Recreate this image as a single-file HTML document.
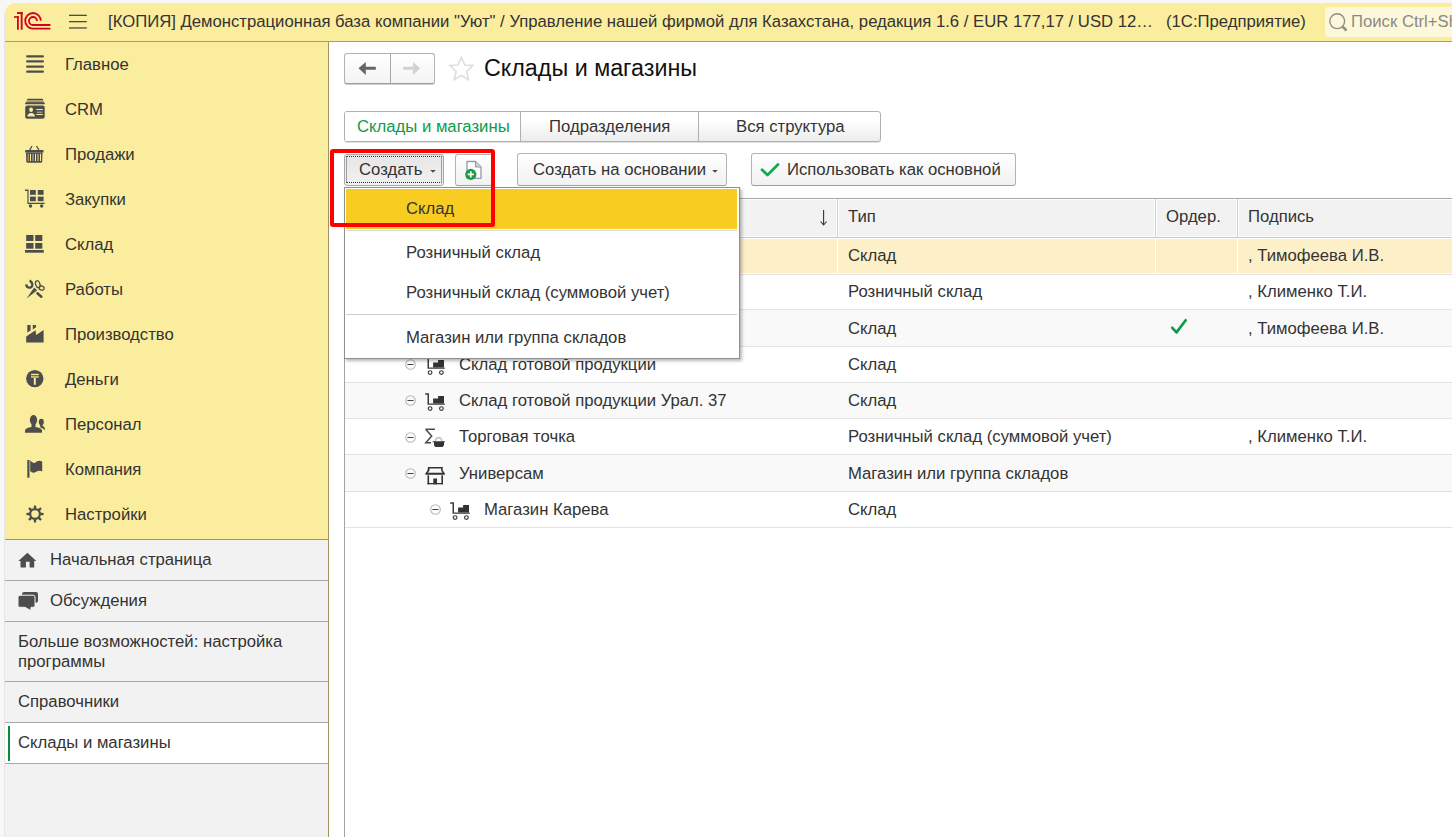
<!DOCTYPE html>
<html><head><meta charset="utf-8">
<style>
*{box-sizing:border-box;margin:0;padding:0}
html,body{width:1452px;height:837px;overflow:hidden;background:#f7f7f7;font-family:"Liberation Sans",sans-serif;color:#333}
.a{position:absolute}
.t{position:absolute;white-space:nowrap;font-size:16.7px;line-height:20px}
svg{position:absolute;overflow:visible}
#hdr{position:absolute;left:5px;top:3px;width:1447px;height:39px;background:#fbed9e;border-bottom:1px solid #a49e69;border-top-left-radius:10px}
#side{position:absolute;left:5px;top:42px;width:324px;height:795px;background:#f2f2f2;border-right:1px solid #9f9763}
#secs{position:absolute;left:5px;top:42px;width:323px;height:498px;background:#fbed9e;border-bottom:1px solid #9f9763}
#content{position:absolute;left:329px;top:42px;width:1123px;height:795px;background:#fff}
.hl{position:absolute;left:5px;width:323px;height:1px;background:#a9a9a9}
</style></head><body>
<div id="hdr"></div>
<div id="side"></div>
<div id="secs"></div>
<div id="content"></div>
<div class="a" style="left:4px;top:14px;width:1px;height:823px;background:#e6e6e6"></div>
<div class="hl" style="top:580px"></div>
<div class="hl" style="top:621px"></div>
<div class="hl" style="top:681px"></div>
<div class="hl" style="top:722px"></div>
<div class="a" style="left:5px;top:723px;width:323px;height:40px;background:#fff"></div>
<div class="hl" style="top:763px"></div>
<div class="a" style="left:8px;top:726px;width:2px;height:35px;background:#0a8a3c"></div>


<!-- header icons -->
<svg style="left:0;top:0" width="100" height="40" viewBox="0 0 100 40">
 <g fill="#d4011b">
  <rect x="17" y="12.1" width="5.6" height="1.9"/>
  <rect x="20.7" y="12.1" width="1.9" height="17.6"/>
  <rect x="17" y="16.2" width="1.8" height="13.5"/>
  <rect x="14" y="16.2" width="4.8" height="1.6"/>
 </g>
 <g fill="none" stroke="#d4011b" stroke-width="1.8">
  <path d="M33,28.6 A7.8,7.8 0 1 1 40.8,20.8"/>
  <path d="M33,25 A4,4 0 1 1 37,21"/>
  <path d="M33,28.6 H50.4 M33,25 H50.4"/>
 </g>
 <g fill="#4a4a4a">
  <rect x="69" y="14.7" width="17.8" height="1.3"/>
  <rect x="69" y="21" width="17.8" height="1.3"/>
  <rect x="69" y="27.3" width="17.8" height="1.3"/>
 </g>
</svg>

<!-- sidebar icons -->
<svg style="left:20px;top:50px" width="30" height="30" viewBox="0 0 30 30" fill="#4d4d4d">
 <rect x="6.2" y="5.2" width="17.7" height="2.3" rx=".8"/>
 <rect x="6.2" y="10.3" width="17.7" height="2.3" rx=".8"/>
 <rect x="6.2" y="15.4" width="17.7" height="2.3" rx=".8"/>
 <rect x="6.2" y="20.5" width="17.7" height="2.3" rx=".8"/>
</svg>
<svg style="left:20px;top:95px" width="30" height="30" viewBox="0 0 30 30">
 <path d="M7.6,4 H22.6 L24.7,8.9 H5.2 Z" fill="#4d4d4d" opacity=".5"/>
 <rect x="7.2" y="3.8" width="15.8" height="1.3" rx=".6" fill="#4d4d4d"/>
 <path d="M5.2,8.6 Q5.2,7.2 6.6,7.2 H23.3 Q24.7,7.2 24.7,8.6 V9.2 H5.2 Z" fill="#4d4d4d"/>
 <rect x="5.2" y="10.4" width="19.5" height="13.4" rx="2" fill="#4d4d4d"/>
 <g fill="#fbed9e">
  <ellipse cx="11.1" cy="14.7" rx="1.9" ry="2.2"/>
  <path d="M7.4,21.6 Q7.6,18.2 11.2,18.1 Q14.8,18.2 15,21.6 Z"/>
  <rect x="16.3" y="14" width="6.5" height="1"/>
  <rect x="16.8" y="16.7" width="5.5" height="1" opacity=".7"/>
  <rect x="16.3" y="19" width="6.5" height="1"/>
 </g>
</svg>
<svg style="left:20px;top:140px" width="30" height="30" viewBox="0 0 30 30">
 <path d="M12,6 L9.5,10.5 M16.5,6 L19.2,10.5" stroke="#4d4d4d" stroke-width="1.3"/>
 <rect x="5.2" y="10" width="18.3" height="2.6" rx=".6" fill="#4d4d4d"/>
 <path d="M6,12.5 H22.5 L22.2,21.5 Q22,22.7 21,22.7 H7.5 Q6.5,22.7 6.3,21.5 Z" fill="#4d4d4d"/>
 <g fill="#fbed9e">
  <rect x="10" y="13.8" width="1" height="7.3"/>
  <rect x="15" y="13.8" width="1" height="7.3"/>
  <rect x="20" y="13.8" width="1" height="7.3"/>
  <rect x="7.6" y="13.8" width="1.4" height="7.3" opacity=".45"/>
  <rect x="12.2" y="13.8" width="1.6" height="7.3" opacity=".45"/>
  <rect x="17" y="13.8" width="2" height="7.3" opacity=".45"/>
 </g>
</svg>
<svg style="left:20px;top:185px" width="30" height="30" viewBox="0 0 30 30" fill="#4d4d4d">
 <path d="M5,4.6 H8.6 V17.7 H24.7 V18.9 H7.4 V5.9 H5 Z"/>
 <rect x="10" y="5" width="5.8" height="4.8"/>
 <rect x="17.8" y="5" width="5.8" height="4.8"/>
 <rect x="10" y="11.6" width="5.8" height="4.6"/>
 <rect x="17.8" y="11.6" width="5.8" height="4.6"/>
 <circle cx="10.5" cy="21" r="1.7"/>
 <circle cx="21.7" cy="21" r="1.7"/>
</svg>
<svg style="left:20px;top:230px" width="30" height="30" viewBox="0 0 30 30" fill="#4d4d4d">
 <rect x="6.2" y="5" width="7.3" height="6"/>
 <rect x="15.2" y="5" width="7.1" height="6"/>
 <rect x="6.2" y="13" width="7.3" height="5.7"/>
 <rect x="15.2" y="13" width="7.1" height="5.7"/>
 <rect x="5" y="20" width="18.8" height="2.7"/>
</svg>
<svg style="left:20px;top:275px" width="30" height="30" viewBox="0 0 30 30">
 <g fill="none" stroke="#4d4d4d">
  <path d="M6.2,9.3 Q6.5,12.5 9.5,12.6 Q12.6,12.4 12.3,9.2 Q12,6.8 9.6,5.6" stroke-width="2.3"/>
  <ellipse cx="17.8" cy="9.2" rx="2.1" ry="3.6" stroke-width="1.3" transform="rotate(-20 17.8 9.2)"/>
  <ellipse cx="21.6" cy="13" rx="2.6" ry="2.1" stroke-width="1.3" transform="rotate(20 21.6 13)"/>
  <path d="M17.4,18.3 L21.3,21.7" stroke-width="2.6" stroke-linecap="round"/>
 </g>
 <path d="M6.6,23.6 L14.2,12.6 L17.2,15.2 Z" fill="#4d4d4d"/>
</svg>
<svg style="left:20px;top:320px" width="30" height="30" viewBox="0 0 30 30" fill="#4d4d4d">
 <path d="M7.3,5 H10.6 V10.6 L7.3,12.6 Z"/>
 <path d="M12.8,5 H16 V7.3 L12.8,9.4 Z"/>
 <path d="M6.2,16.4 L15.6,10.3 L16.1,15 L23.6,10 V22.6 H6.2 Z"/>
</svg>
<svg style="left:20px;top:365px" width="30" height="30" viewBox="0 0 30 30">
 <circle cx="14.8" cy="13.6" r="8.7" fill="#4d4d4d"/>
 <g fill="#fbed9e">
  <rect x="11" y="8.8" width="7.8" height="1.3"/>
  <rect x="11" y="10.8" width="7.8" height="2" opacity=".7"/>
  <rect x="13.8" y="12.8" width="2" height="7"/>
 </g>
</svg>
<svg style="left:20px;top:410px" width="30" height="30" viewBox="0 0 30 30" fill="#4d4d4d">
 <ellipse cx="13.5" cy="10" rx="3.6" ry="5"/>
 <path d="M11.5,14 H15.5 V17 Q20.5,17.6 22,20 V22.7 H5 V20 Q6.5,17.6 11.5,17 Z"/>
 <ellipse cx="21.3" cy="12.1" rx="2.5" ry="3.3"/>
 <path d="M19.9,14.6 H22.5 L22.7,16 Q24.7,16.8 24.9,18.6 V20.2 Q23,18.2 20.6,17.8 Z"/>
</svg>
<svg style="left:20px;top:455px" width="30" height="30" viewBox="0 0 30 30" fill="#4d4d4d">
 <rect x="7.3" y="5" width="2.2" height="17.7"/>
 <path d="M10.2,5.5 Q12.5,8.3 15,7.8 Q18.5,4.3 22.2,6.6 V16.5 Q19.5,14.6 15.8,17 Q12.5,18.7 10.2,16 Z"/>
</svg>
<svg style="left:20px;top:500px" width="30" height="30" viewBox="0 0 30 30">
 <g transform="translate(15,14)" fill="#4d4d4d"><path d="M-1.4,-5.2 L-1,-8.6 H1 L1.4,-5.2 Z" transform="rotate(0)"/><path d="M-1.4,-5.2 L-1,-8.6 H1 L1.4,-5.2 Z" transform="rotate(45)"/><path d="M-1.4,-5.2 L-1,-8.6 H1 L1.4,-5.2 Z" transform="rotate(90)"/><path d="M-1.4,-5.2 L-1,-8.6 H1 L1.4,-5.2 Z" transform="rotate(135)"/><path d="M-1.4,-5.2 L-1,-8.6 H1 L1.4,-5.2 Z" transform="rotate(180)"/><path d="M-1.4,-5.2 L-1,-8.6 H1 L1.4,-5.2 Z" transform="rotate(225)"/><path d="M-1.4,-5.2 L-1,-8.6 H1 L1.4,-5.2 Z" transform="rotate(270)"/><path d="M-1.4,-5.2 L-1,-8.6 H1 L1.4,-5.2 Z" transform="rotate(315)"/>
  <circle cx="0" cy="0" r="4.85" fill="none" stroke="#4d4d4d" stroke-width="2.2"/>
 </g>
</svg>
<svg style="left:10px;top:545px" width="30" height="70" viewBox="0 0 30 70" fill="#4d4d4d">
 <path d="M8.4,16 L17.4,7.7 L26.3,16 Z"/>
 <path d="M10.5,15 H24.2 V22.4 H19.6 V16.8 H15.9 V22.4 H10.5 Z"/>
 <rect x="12" y="47" width="16" height="10.7" rx="2"/>
 <path d="M9,50.2 H23.2 Q25,50.2 25,52 V60.5 Q25,62.3 23.2,62.3 H21 L20.8,65.6 L15,62.3 H9.8 Q8,62.3 8,60.5 V52 Q8,50.2 9.8,50.2 Z" stroke="#f2f2f2" stroke-width="1"/>
</svg>


<!-- ===== content ===== -->
<!-- nav buttons -->
<div class="a" style="left:344px;top:53px;width:91px;height:31px;border:1px solid #b3b3b3;border-bottom-color:#9d9d9d;border-radius:3px;background:linear-gradient(#fff,#f4f4f4);box-shadow:0 1px 0 #d0d0d0"></div>
<div class="a" style="left:390px;top:54px;width:1px;height:29px;background:#a8a8a8"></div>
<svg style="left:340px;top:48px" width="100" height="40" viewBox="0 0 100 40">
 <path d="M18.5,20.3 L25.8,14.1 V18.8 H35.8 V21.8 H25.8 V26.9 Z" fill="#666"/>
 <path d="M80.2,20.3 L72.9,14.1 V18.8 H63.2 V21.8 H72.9 V26.9 Z" fill="#d2d2d2"/>
</svg>
<svg style="left:445px;top:53px" width="32" height="32" viewBox="0 0 32 32">
 <path d="M16.4,4.2 L19.8,12 L27.8,12.4 L21.7,18.4 L23.5,26.7 L16.4,22.5 L9.3,26.7 L11.1,18.4 L5,12.4 L13,12 Z" fill="none" stroke="#dedede" stroke-width="1.6" stroke-linejoin="miter"/>
</svg>
<div class="t" style="left:484px;top:53px;font-size:23.3px;line-height:30px;color:#111">Склады и магазины</div>

<!-- tabs -->
<div class="a" style="left:344px;top:111px;width:537px;height:31px;border:1px solid #b0b0b0;border-radius:3px;background:linear-gradient(#fff 30%,#ececec);box-shadow:0 1px 0 #e0e0e0"></div>
<div class="a" style="left:345px;top:112px;width:175px;height:29px;background:#fff;border-radius:2px 0 0 2px"></div>
<div class="a" style="left:520px;top:112px;width:1px;height:29px;background:#b0b0b0"></div>
<div class="a" style="left:698px;top:112px;width:1px;height:29px;background:#b0b0b0"></div>
<div class="t" style="left:357px;top:117px;color:#0d9a4c">Склады и магазины</div>
<div class="t" style="left:549px;top:117px">Подразделения</div>
<div class="t" style="left:736px;top:117px">Вся структура</div>

<!-- command bar -->
<div class="a" style="left:344px;top:154px;width:100px;height:32px;border:1px solid #a9a9a9;border-radius:3px;background:linear-gradient(#e6e6e6,#f1f1f1)"></div>
<div class="a" style="left:346px;top:156px;width:96px;height:27px;border-top:1px dotted #333;border-bottom:1px dotted #333;border-left:1px solid #a0a0a0;border-right:1px solid #a0a0a0"></div>
<div class="t" style="left:359px;top:160px">Создать</div>
<svg style="left:428px;top:168px" width="10" height="6" viewBox="0 0 10 6"><path d="M2.2,2 H7.8 L5,4.8 Z" fill="#4d4d4d"/></svg>

<div class="a" style="left:455px;top:154px;width:38px;height:32px;border:1px solid #b3b3b3;border-bottom-color:#9d9d9d;border-radius:3px;background:linear-gradient(#fff,#f1f1f1)"></div>
<svg style="left:450px;top:150px" width="50" height="40" viewBox="0 0 50 40">
 <path d="M17,11.5 H25.5 L31,17 V28.3 H17 Z" fill="#fff" stroke="#8f9cab" stroke-width="1.3" stroke-linejoin="round"/>
 <path d="M25.5,11.5 V17 H31" fill="#c9d3de" stroke="#8f9cab" stroke-width="1.1"/>
 <circle cx="20.8" cy="24.4" r="5.6" fill="#1d9d3f"/>
 <path d="M20.8,21.3 V27.5 M17.7,24.4 H23.9" stroke="#fff" stroke-width="1.6"/>
</svg>

<div class="a" style="left:517px;top:153px;width:210px;height:33px;border:1px solid #b3b3b3;border-bottom-color:#9d9d9d;border-radius:3px;background:linear-gradient(#fff,#f1f1f1)"></div>
<div class="t" style="left:533px;top:160px">Создать на основании</div>
<svg style="left:710px;top:168px" width="10" height="6" viewBox="0 0 10 6"><path d="M2.1,2.1 H7.9 L5,4.8 Z" fill="#4d4d4d"/></svg>

<div class="a" style="left:751px;top:153px;width:265px;height:33px;border:1px solid #b3b3b3;border-bottom-color:#9d9d9d;border-radius:3px;background:linear-gradient(#fff,#f1f1f1)"></div>
<svg style="left:755px;top:155px" width="30" height="30" viewBox="0 0 30 30"><path d="M7,14.7 L12.5,20 L23,9.5" fill="none" stroke="#16aa4e" stroke-width="2.8" stroke-linejoin="round" stroke-linecap="round"/></svg>
<div class="t" style="left:787px;top:160px">Использовать как основной</div>

<!-- table -->
<div class="a" style="left:344px;top:198px;width:1px;height:639px;background:#a3a3a3"></div>
<div class="a" style="left:345px;top:198px;width:1107px;height:1px;background:#a5a5a5"></div>
<div class="a" style="left:345px;top:199px;width:1107px;height:38px;background:#fff"></div>
<div class="a" style="left:345px;top:200px;width:491px;height:36px;background:#f2f2f2"></div>
<div class="a" style="left:839px;top:200px;width:315px;height:36px;background:#f2f2f2"></div>
<div class="a" style="left:1157px;top:200px;width:79px;height:36px;background:#f2f2f2"></div>
<div class="a" style="left:1239px;top:200px;width:213px;height:36px;background:#f2f2f2"></div>
<div class="a" style="left:345px;top:237px;width:1107px;height:1px;background:#c9c9c9"></div>
<div class="a" style="left:837px;top:199px;width:1px;height:38px;background:#cfcfcf"></div>
<div class="a" style="left:1155px;top:199px;width:1px;height:38px;background:#cfcfcf"></div>
<div class="a" style="left:1237px;top:199px;width:1px;height:38px;background:#cfcfcf"></div>
<svg style="left:815px;top:205px" width="20" height="25" viewBox="0 0 20 25"><path d="M8.6,5 V19.5" stroke="#333" stroke-width="1.1"/><path d="M5.6,16.5 L8.6,20 L11.6,16.5" fill="none" stroke="#333" stroke-width="1.1"/></svg>
<div class="t" style="left:848px;top:207px">Тип</div>
<div class="t" style="left:1166px;top:207px">Ордер.</div>
<div class="t" style="left:1248px;top:207px">Подпись</div>

<!-- rows -->
<div class="a" style="left:345px;top:239px;width:1107px;height:34px;background:#fdf0c8"></div>
<div class="a" style="left:837px;top:239px;width:1px;height:34px;background:#fff"></div>
<div class="a" style="left:1155px;top:239px;width:1px;height:34px;background:#fff"></div>
<div class="a" style="left:1237px;top:239px;width:1px;height:34px;background:#fff"></div>
<div class="a" style="left:345px;top:274px;width:1107px;height:1px;background:#e2e2e2"></div>
<div class="a" style="left:345px;top:309px;width:1107px;height:1px;background:#e2e2e2"></div>
<div class="a" style="left:345px;top:310px;width:1107px;height:36px;background:#f9f9f9"></div>
<div class="a" style="left:345px;top:346px;width:1107px;height:1px;background:#e2e2e2"></div>
<div class="a" style="left:345px;top:382px;width:1107px;height:1px;background:#e2e2e2"></div>
<div class="a" style="left:345px;top:383px;width:1107px;height:35px;background:#f9f9f9"></div>
<div class="a" style="left:345px;top:418px;width:1107px;height:1px;background:#e2e2e2"></div>
<div class="a" style="left:345px;top:454px;width:1107px;height:1px;background:#e2e2e2"></div>
<div class="a" style="left:345px;top:455px;width:1107px;height:36px;background:#f9f9f9"></div>
<div class="a" style="left:345px;top:491px;width:1107px;height:1px;background:#e2e2e2"></div>
<div class="a" style="left:345px;top:527px;width:1107px;height:1px;background:#e2e2e2"></div>

<div class="t" style="left:848px;top:246px">Склад</div>
<div class="t" style="left:1248px;top:246px">, Тимофеева И.В.</div>
<div class="t" style="left:848px;top:282px">Розничный склад</div>
<div class="t" style="left:1248px;top:282px">, Клименко Т.И.</div>
<div class="t" style="left:848px;top:319px">Склад</div>
<svg style="left:1160px;top:310px" width="40" height="35" viewBox="0 0 40 35"><path d="M12.3,17.8 L16.5,22.4 L25.7,10.3" fill="none" stroke="#109a48" stroke-width="2.7" stroke-linecap="round" stroke-linejoin="round"/></svg>
<div class="t" style="left:1248px;top:319px">, Тимофеева И.В.</div>

<div class="t" style="left:459px;top:355px">Склад готовой продукции</div>
<div class="t" style="left:848px;top:355px">Склад</div>
<div class="t" style="left:459px;top:391px">Склад готовой продукции Урал. 37</div>
<div class="t" style="left:848px;top:391px">Склад</div>
<div class="t" style="left:459px;top:427px">Торговая точка</div>
<div class="t" style="left:848px;top:427px">Розничный склад (суммовой учет)</div>
<div class="t" style="left:1248px;top:427px">, Клименко Т.И.</div>
<div class="t" style="left:459px;top:464px">Универсам</div>
<div class="t" style="left:848px;top:464px">Магазин или группа складов</div>
<div class="t" style="left:484px;top:500px">Магазин Карева</div>
<div class="t" style="left:848px;top:500px">Склад</div>


<!-- tree icons -->
<svg style="left:0;top:0;width:0;height:0">
 <defs>
  <g id="minus"><circle cx="0" cy="0" r="4.8" fill="none" stroke="#b9b9b9" stroke-width="1.1"/><path d="M-3.1,0 H3.1" stroke="#444" stroke-width="1"/></g>
  <g id="cart" fill="#333">
   <path d="M14.7,-7.2 H18.5 V2.9 H34 L34.6,4.3 H17 V-5.7 H14.7 Z" fill="#3c3c3c"/>
   <path d="M22.6,-2 H27.6 V-4.5 H33.5 V2.9 H22.6 Z"/>
   <circle cx="19.6" cy="8.1" r="1.85" fill="none" stroke="#3a3a3a" stroke-width="1.2"/>
   <circle cx="30.9" cy="8.1" r="1.85" fill="none" stroke="#3a3a3a" stroke-width="1.2"/>
  </g>
 </defs>
</svg>
<svg style="left:410px;top:364px" width="1" height="1"><g transform="translate(0.5,0.5)"><use href="#minus"/><use href="#cart"/></g></svg>
<svg style="left:410px;top:400px" width="1" height="1"><g transform="translate(0.5,0.5)"><use href="#minus"/><use href="#cart"/></g></svg>
<svg style="left:410px;top:437px" width="1" height="1"><g transform="translate(0.5,0.5)"><use href="#minus"/>
 <path d="M14.9,-8.2 H24.4 M15.3,-8 L21.2,-1.4 L15.3,5.2 H20.5" fill="none" stroke="#4a4a4a" stroke-width="1.5"/>
 <path d="M24.4,3.8 L26.1,0.4 H30 L31.7,3.8" fill="none" stroke="#9a9a9a" stroke-width="1"/>
 <path d="M22.1,3.7 H34.4 V4.8 H33.5 V7.6 Q33.4,9.4 31.6,9.4 H25.4 Q23.6,9.4 23.5,7.6 V4.8 H22.1 Z" fill="#333"/>
</g></svg>
<svg style="left:410px;top:473px" width="1" height="1"><g transform="translate(0.5,0.5)"><use href="#minus"/>
 <g fill="#333">
  <path d="M17.4,-6.6 H32.2 V-3.2 L34.4,0 V1.2 H14.9 V0 L17.1,-3.2 Z"/>
  <rect x="17" y="1.8" width="1.6" height="9"/>
  <rect x="30.9" y="1.8" width="1.6" height="9"/>
  <rect x="17" y="9.5" width="15.5" height="1.3"/>
  <rect x="22.8" y="5" width="3.7" height="5.8"/>
 </g>
 <path d="M19,-4.9 H30.6 V-3 L32,-0.8 H17.4 L19,-3 Z" fill="#fafafa"/>
</g></svg>
<svg style="left:435px;top:509px" width="1" height="1"><g transform="translate(0.5,0.5)"><use href="#minus"/><use href="#cart"/></g></svg>

<!-- dropdown menu -->
<div class="a" style="left:344px;top:187px;width:396px;height:172px;background:#fff;border:1px solid #8f8f8f;box-shadow:2px 2px 3px rgba(0,0,0,.28)"></div>
<div class="a" style="left:346px;top:189px;width:391px;height:40px;background:#f9cc22"></div>
<div class="a" style="left:346px;top:230px;width:391px;height:1px;background:#d9d9d9"></div>
<div class="a" style="left:346px;top:314px;width:391px;height:1px;background:#cfcfcf"></div>
<div class="t" style="left:406px;top:199px">Склад</div>
<div class="t" style="left:406px;top:243px">Розничный склад</div>
<div class="t" style="left:406px;top:283px">Розничный склад (суммовой учет)</div>
<div class="t" style="left:406px;top:328px">Магазин или группа складов</div>

<!-- red highlight -->
<div class="a" style="left:330px;top:149px;width:165px;height:78px;border:4px solid #ff0000;border-radius:3px"></div>

<!-- header text -->
<div class="t" style="left:108px;top:12px">[КОПИЯ] Демонстрационная база компании "Уют" / Управление нашей фирмой для Казахстана, редакция 1.6 / EUR 177,17 / USD 12…</div>
<div class="t" style="left:1166px;top:12px">(1С:Предприятие)</div>
<div class="a" style="left:1325px;top:7px;width:140px;height:30px;background:#fdf8dc;border-radius:3px"></div>
<svg style="left:1320px;top:3px" width="40" height="37" viewBox="0 0 40 37">
 <circle cx="17.2" cy="18.2" r="7.4" fill="none" stroke="#8f8f86" stroke-width="1.4"/>
 <path d="M22.3,23.3 L26.5,27.5" stroke="#8f8f86" stroke-width="2.6"/>
</svg>
<div class="t" style="left:1351px;top:12px;color:#8c8a80">Поиск Ctrl+Shift+F</div>

<!-- sidebar text -->
<div class="t" style="left:65px;top:55px">Главное</div>
<div class="t" style="left:65px;top:100px">CRM</div>
<div class="t" style="left:65px;top:145px">Продажи</div>
<div class="t" style="left:65px;top:190px">Закупки</div>
<div class="t" style="left:65px;top:235px">Склад</div>
<div class="t" style="left:65px;top:280px">Работы</div>
<div class="t" style="left:65px;top:325px">Производство</div>
<div class="t" style="left:65px;top:370px">Деньги</div>
<div class="t" style="left:65px;top:415px">Персонал</div>
<div class="t" style="left:65px;top:460px">Компания</div>
<div class="t" style="left:65px;top:505px">Настройки</div>

<div class="t" style="left:50px;top:550px">Начальная страница</div>
<div class="t" style="left:50px;top:591px">Обсуждения</div>
<div class="t" style="left:18px;top:632px">Больше возможностей: настройка</div>
<div class="t" style="left:18px;top:652px">программы</div>
<div class="t" style="left:18px;top:692px">Справочники</div>
<div class="t" style="left:18px;top:733px">Склады и магазины</div>

</body></html>
